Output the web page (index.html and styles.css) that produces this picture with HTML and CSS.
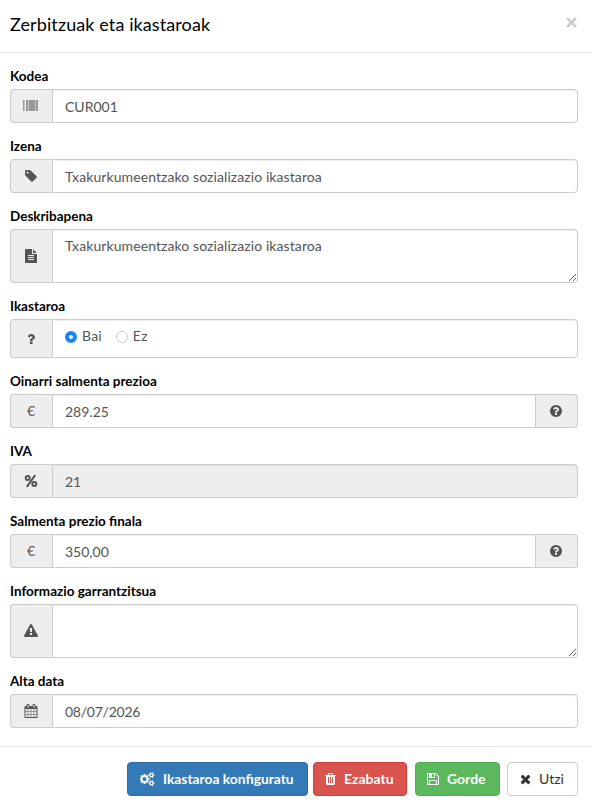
FILE: index.html
```html
<!DOCTYPE html>
<html lang="eu">
<head>
    <meta charset="UTF-8">
    <meta name="viewport" content="width=device-width, initial-scale=1.0">
    <title>Zerbitzuak eta ikastaroak</title>
    <link rel="stylesheet" href="styles.css">
</head>
<body>
    <div class="modal-header">
        <h4 class="modal-title">Zerbitzuak eta ikastaroak</h4>
        <button type="button" class="close" aria-label="Itxi">
            <svg viewBox="0 0 10 10"><path d="M1 1l8 8M9 1l-8 8"/></svg>
        </button>
    </div>
    <form class="modal-body">
        <div class="form-group">
            <label for="kodea">Kodea</label>
            <div class="input-group">
                <span class="addon">
                    <svg class="barcode" viewBox="0 0 16 12"><path fill="#999" d="M0 0h1v11H0zM3 0h2v11H3zM6 0h1v11H6zM7 0h5v11H7zM13 0h2v11h-2z"/><path fill="#c4c4c4" d="M1 0h1v11H1zM5 0h1v11H5zM12 0h1v11h-1z"/></svg>
                </span>
                <input type="text" id="kodea" class="form-control" value="CUR001">
            </div>
        </div>
        <div class="form-group">
            <label for="izena">Izena</label>
            <div class="input-group">
                <span class="addon">
                    <svg class="icon" viewBox="0 0 1792 1792"><path d="M576 448q0-53-37.500-90.500t-90.500-37.500-90.500 37.500-37.500 90.500 37.500 90.500 90.500 37.500 90.500-37.500 37.500-90.500zm1067 576q0 53-37 90l-491 492q-39 37-91 37-53 0-90-37l-715-716q-38-37-64.500-101t-26.500-117v-416q0-52 38-90t90-38h416q53 0 117 26.500t102 64.500l715 714q37 39 37 91z"/></svg>
                </span>
                <input type="text" id="izena" class="form-control prose" value="Txakurkumeentzako sozializazio ikastaroa">
            </div>
        </div>
        <div class="form-group">
            <label for="deskribapena">Deskribapena</label>
            <div class="input-group">
                <span class="addon">
                    <svg class="icon" viewBox="0 0 1792 1792"><path d="M1596 476q14 14 28 36h-472v-472q22 14 36 28zm-476 164h544v1056q0 40-28 68t-68 28h-1344q-40 0-68-28t-28-68v-1600q0-40 28-68t68-28h800v544q0 40 28 68t68 28zm160 736v-64q0-14-9-23t-23-9h-704q-14 0-23 9t-9 23v64q0 14 9 23t23 9h704q14 0 23-9t9-23zm0-256v-64q0-14-9-23t-23-9h-704q-14 0-23 9t-9 23v64q0 14 9 23t23 9h704q14 0 23-9t9-23zm0-256v-64q0-14-9-23t-23-9h-704q-14 0-23 9t-9 23v64q0 14 9 23t23 9h704q14 0 23-9t9-23z"/></svg>
                </span>
                <textarea id="deskribapena" class="form-control prose">Txakurkumeentzako sozializazio ikastaroa</textarea>
            </div>
        </div>
        <div class="form-group">
            <label>Ikastaroa</label>
            <div class="input-group">
                <span class="addon">
                    <svg class="icon" viewBox="0 0 1792 1792"><path d="M1088 1256v240q0 16-12 28t-28 12h-240q-16 0-28-12t-12-28v-240q0-16 12-28t28-12h240q16 0 28 12t12 28zm316-600q0 54-15.500 101t-35 76.500-55 59.500-57.500 43.500-61 35.500q-41 23-68.500 65t-27.500 67q0 17-12 32.500t-28 15.500h-240q-15 0-25.500-18.500t-10.500-37.500v-45q0-83 65-156.500t143-108.500q59-27 84-56t25-76q0-42-46.500-74t-107.500-32q-65 0-108 29-35 25-107 115-13 16-31 16-12 0-25-8l-164-125q-13-10-15.500-25t5.500-28q160-266 464-266 80 0 161 31t146 83 106 127.500 41 158.500z"/></svg>
                </span>
                <div class="form-control radios">
                    <label class="radio"><input type="radio" name="ikastaroa" checked>Bai</label>
                    <label class="radio"><input type="radio" name="ikastaroa">Ez</label>
                </div>
            </div>
        </div>
        <div class="form-group">
            <label for="oinarria">Oinarri salmenta prezioa</label>
            <div class="input-group">
                <span class="addon">€</span>
                <input type="text" id="oinarria" class="form-control" value="289.25">
                <span class="addon">
                    <svg class="icon" viewBox="0 0 1792 1792"><path d="M1024 1376v-192q0-14-9-23t-23-9h-192q-14 0-23 9t-9 23v192q0 14 9 23t23 9h192q14 0 23-9t9-23zm256-672q0-88-55.500-163t-138.500-116-170-41q-243 0-371 213-15 24 8 42l132 100q7 6 19 6 16 0 25-12 53-68 86-92 34-24 86-24 48 0 85.500 26t37.500 59q0 38-20 61t-68 45q-63 28-115.500 86.500t-52.500 125.500v36q0 14 9 23t23 9h192q14 0 23-9t9-23q0-19 21.500-49.500t54.500-49.500q32-18 49-28.500t46-35 44.500-48 28-60.500 12.500-81zm384 192q0 209-103 385.500t-279.500 279.500-385.500 103-385.500-103-279.500-279.500-103-385.500 103-385.500 279.500-279.500 385.500-103 385.500 103 279.500 279.500 103 385.500z"/></svg>
                </span>
            </div>
        </div>
        <div class="form-group">
            <label for="iva">IVA</label>
            <div class="input-group">
                <span class="addon">
                    <svg class="icon percent" viewBox="0 0 14 14"><circle cx="3.700" cy="4" r="2"/><circle cx="10.300" cy="10" r="2"/><path d="M11.200 1.200L2.800 12.800"/></svg>
                </span>
                <input type="text" id="iva" class="form-control" value="21" readonly>
            </div>
        </div>
        <div class="form-group">
            <label for="finala">Salmenta prezio finala</label>
            <div class="input-group">
                <span class="addon">€</span>
                <input type="text" id="finala" class="form-control" value="350,00">
                <span class="addon">
                    <svg class="icon" viewBox="0 0 1792 1792"><path d="M1024 1376v-192q0-14-9-23t-23-9h-192q-14 0-23 9t-9 23v192q0 14 9 23t23 9h192q14 0 23-9t9-23zm256-672q0-88-55.500-163t-138.500-116-170-41q-243 0-371 213-15 24 8 42l132 100q7 6 19 6 16 0 25-12 53-68 86-92 34-24 86-24 48 0 85.500 26t37.500 59q0 38-20 61t-68 45q-63 28-115.500 86.500t-52.500 125.500v36q0 14 9 23t23 9h192q14 0 23-9t9-23q0-19 21.500-49.500t54.500-49.500q32-18 49-28.500t46-35 44.500-48 28-60.500 12.500-81zm384 192q0 209-103 385.500t-279.500 279.500-385.500 103-385.500-103-279.500-279.500-103-385.500 103-385.500 279.500-279.500 385.500-103 385.500 103 279.500 279.500 103 385.500z"/></svg>
                </span>
            </div>
        </div>
        <div class="form-group">
            <label for="informazioa">Informazio garrantzitsua</label>
            <div class="input-group">
                <span class="addon">
                    <svg class="icon" viewBox="0 0 1792 1792"><path d="M1024 1375v-190q0-14-9.500-23.500t-22.500-9.500h-192q-13 0-22.500 9.500t-9.500 23.500v190q0 14 9.500 23.500t22.500 9.500h192q13 0 22.500-9.500t9.500-23.500zm-2-374l18-459q0-12-10-19-13-11-24-11h-220q-11 0-24 11-10 7-10 21l17 457q0 10 10 16.500t24 6.500h185q14 0 23.500-6.500t10.500-16.500zm-14-934l768 1408q35 63-2 126-17 29-46.500 46t-63.500 17h-1536q-34 0-63.500-17t-46.500-46q-37-63-2-126l768-1408q17-31 47-49t65-18 65 18 47 49z"/></svg>
                </span>
                <textarea id="informazioa" class="form-control"></textarea>
            </div>
        </div>
        <div class="form-group">
            <label for="data">Alta data</label>
            <div class="input-group">
                <span class="addon">
                    <svg class="icon" viewBox="0 0 1792 1792"><path d="M192 1664h288v-288h-288v288zm352 0h320v-288h-320v288zm-352-352h288v-320h-288v320zm352 0h320v-320h-320v320zm-352-384h288v-288h-288v288zm736 736h320v-288h-320v288zm-384-736h320v-288h-320v288zm768 736h288v-288h-288v288zm-384-352h320v-320h-320v320zm-352-864v-288q0-13-9.500-22.500t-22.500-9.500h-64q-13 0-22.500 9.500t-9.500 22.500v288q0 13 9.500 22.500t22.500 9.500h64q13 0 22.500-9.500t9.500-22.500zm736 864h288v-320h-288v320zm-384-384h320v-288h-320v288zm384 0h288v-288h-288v288zm32-480v-288q0-13-9.500-22.500t-22.500-9.500h-64q-13 0-22.500 9.500t-9.500 22.500v288q0 13 9.500 22.500t22.500 9.500h64q13 0 22.500-9.500t9.500-22.500zm384-64v1280q0 52-38 90t-90 38h-1408q-52 0-90-38t-38-90v-1280q0-52 38-90t90-38h128v-96q0-66 47-113t113-47h64q66 0 113 47t47 113v96h384v-96q0-66 47-113t113-47h64q66 0 113 47t47 113v96h128q52 0 90 38t38 90z"/></svg>
                </span>
                <input type="text" id="data" class="form-control date" value="08/07/2026">
            </div>
        </div>
    </form>
    <div class="modal-footer">
        <button type="button" class="btn btn-primary">
            <svg class="icon wide" viewBox="0 0 1920 1792"><path d="M832 896q0-106-75-181t-181-75-181 75-75 181 75 181 181 75 181-75 75-181zm768 512q0-52-38-90t-90-38-90 38-38 90q0 53 37.500 90.500t90.500 37.500 90.500-37.500 37.500-90.500zm0-1024q0-52-38-90t-90-38-90 38-38 90q0 53 37.500 90.500t90.500 37.500 90.500-37.500 37.500-90.500zm-384 421v185q0 10-7 19.500t-16 10.500l-155 24q-11 35-32 76 34 48 90 115 7 11 7 20 0 12-7 19-23 30-82.500 89.500t-78.500 59.500q-11 0-21-7l-115-90q-37 19-77 31-11 108-23 155-7 24-30 24h-186q-11 0-20-7.500t-10-17.500l-23-153q-34-10-75-31l-118 89q-7 7-20 7-11 0-21-8-144-133-144-160 0-9 7-19 10-14 41-53t47-61q-23-44-35-82l-152-24q-10-1-17-9.500t-7-19.500v-185q0-10 7-19.500t16-10.500l155-24q11-35 32-76-34-48-90-115-7-11-7-20 0-12 7-20 22-30 82-89t79-59q11 0 21 7l115 90q34-18 77-32 11-108 23-154 7-24 30-24h186q11 0 20 7.500t10 17.500l23 153q34 10 75 31l118-89q8-7 20-7 11 0 21 8 144 133 144 160 0 8-7 19-12 16-42 54t-45 60q23 48 34 82l152 23q10 2 17 10.500t7 19.500zm640 533v140q0 16-149 31-12 27-30 52 51 113 51 138 0 4-4 7-122 71-124 71-8 0-46-47t-52-68q-20 2-30 2t-30-2q-14 21-52 68t-46 47q-2 0-124-71-4-3-4-7 0-25 51-138-18-25-30-52-149-15-149-31v-140q0-16 149-31 13-29 30-52-51-113-51-138 0-4 4-7 4-2 35-20t59-34 30-16q8 0 46 46.500t52 67.500q20-2 30-2t30 2q51-71 92-112l6-2q4 0 124 70 4 3 4 7 0 25-51 138 17 23 30 52 149 15 149 31zm0-1024v140q0 16-149 31-12 27-30 52 51 113 51 138 0 4-4 7-122 71-124 71-8 0-46-47t-52-68q-20 2-30 2t-30-2q-14 21-52 68t-46 47q-2 0-124-71-4-3-4-7 0-25 51-138-18-25-30-52-149-15-149-31v-140q0-16 149-31 13-29 30-52-51-113-51-138 0-4 4-7 4-2 35-20t59-34 30-16q8 0 46 46.500t52 67.500q20-2 30-2t30 2q51-71 92-112l6-2q4 0 124 70 4 3 4 7 0 25-51 138 17 23 30 52 149 15 149 31z"/></svg>
            Ikastaroa konfiguratu
        </button>
        <button type="button" class="btn btn-danger">
            <svg class="icon narrow" viewBox="192 0 1408 1792"><path d="M704 1376v-704q0-14-9-23t-23-9h-64q-14 0-23 9t-9 23v704q0 14 9 23t23 9h64q14 0 23-9t9-23zm256 0v-704q0-14-9-23t-23-9h-64q-14 0-23 9t-9 23v704q0 14 9 23t23 9h64q14 0 23-9t9-23zm256 0v-704q0-14-9-23t-23-9h-64q-14 0-23 9t-9 23v704q0 14 9 23t23 9h64q14 0 23-9t9-23zm-544-992h448l-48-117q-7-9-17-11h-317q-10 2-17 11zm928 32v64q0 14-9 23t-23 9h-96v948q0 83-47 143.500t-113 60.500h-832q-66 0-113-58.500t-47-141.500v-952h-96q-14 0-23-9t-9-23v-64q0-14 9-23t23-9h309l70-167q15-37 54-63t79-26h320q40 0 79 26t54 63l70 167h309q14 0 23 9t9 23z"/></svg>
            Ezabatu
        </button>
        <button type="button" class="btn btn-success">
            <svg class="icon mid" viewBox="128 0 1536 1792"><path d="M512 1536h768v-384h-768v384zm896 0h128v-896q0-14-10-38.500t-20-34.500l-281-281q-10-10-34-20t-39-10v416q0 40-28 68t-68 28h-576q-40 0-68-28t-28-68v-416h-128v1280h128v-416q0-40 28-68t68-28h832q40 0 68 28t28 68v416zm-384-928v-320q0-13-9.500-22.500t-22.500-9.500h-192q-13 0-22.500 9.500t-9.500 22.500v320q0 13 9.500 22.500t22.500 9.500h192q13 0 22.500-9.500t9.500-22.500zm640 32v928q0 40-28 68t-68 28h-1344q-40 0-68-28t-28-68v-1344q0-40 28-68t68-28h928q40 0 88 20t76 48l280 280q28 28 48 76t20 88z"/></svg>
            Gorde
        </button>
        <button type="button" class="btn btn-default">
            <svg class="icon narrow" viewBox="192 0 1408 1792"><path d="M1490 1322q0 40-28 68l-136 136q-28 28-68 28t-68-28l-294-294-294 294q-28 28-68 28t-68-28l-136-136q-28-28-28-68t28-68l294-294-294-294q-28-28-28-68t28-68l136-136q28-28 68-28t68 28l294 294 294-294q28-28 68-28t68 28l136 136q28 28 28 68t-28 68l-294 294 294 294q28 28 28 68z"/></svg>
            Utzi
        </button>
    </div>
</body>
</html>
```
FILE: styles.css
```css
* {
    box-sizing: border-box;
}
body {
    margin: 0;
    background-color: #fff;
    color: #000;
    font-family: Lato, "Open Sans", sans-serif;
    font-size: 14px;
    line-height: 20px;
}
.modal-header {
    display: flex;
    justify-content: space-between;
    height: 53px;
    padding: 12px 15px 0 10px;
    border-bottom: 1px solid #e5e5e5;
}
.modal-title {
    margin: 0;
    font-size: 18px;
    font-weight: 400;
    line-height: 25px;
    letter-spacing: .1px;
}
.close {
    width: 11px;
    height: 11px;
    margin-top: 5px;
    padding: 0;
    border: 0;
    background: none;
}
.close svg {
    display: block;
    width: 11px;
    height: 11px;
    fill: none;
    stroke: #ccc;
    stroke-width: 2.300;
}
.modal-body {
    padding: 13px 14px 5px 10px;
}
.form-group {
    margin-bottom: 13px;
}
.form-group > label {
    display: block;
    height: 20px;
    margin-bottom: 3px;
    font-size: 13.500px;
    font-weight: 700;
}
.input-group {
    display: flex;
}
.addon {
    display: flex;
    align-items: center;
    justify-content: center;
    width: 42px;
    padding-right: 1px;
    border: 1px solid #ccc;
    border-right: 0;
    border-radius: 4px 0 0 4px;
    background-color: #eee;
    color: #555;
}
.addon:last-child {
    border-right: 1px solid #ccc;
    border-left: 0;
    border-radius: 0 4px 4px 0;
}
.form-control {
    flex: 1;
    min-width: 0;
    height: 34px;
    margin: 0;
    padding: 6px 12px;
    border: 1px solid #ccc;
    border-radius: 0;
    background-color: #fff;
    box-shadow: inset 0 1px 1px rgba(0, 0, 0, .075);
    color: #555;
    font: inherit;
    outline: 0;
}
.form-control:last-child {
    border-radius: 0 4px 4px 0;
}
.form-control[readonly] {
    background-color: #eee;
}
.form-control.prose {
    letter-spacing: .09px;
}
.form-control.date {
    letter-spacing: -.25px;
}
textarea.form-control {
    height: 54px;
    resize: vertical;
}
.radios {
    display: flex;
    gap: 14px;
    height: 39px;
    letter-spacing: .2px;
}
.radio {
    display: flex;
    gap: 5px;
}
.radio input {
    width: 12px;
    height: 12px;
    margin: 5px 0 0;
    border: 1px solid #ccc;
    border-radius: 50%;
    background-color: #fff;
    appearance: none;
}
.radio input:checked {
    border: 4px solid #1a82fb;
}
.icon {
    flex-shrink: 0;
    width: 14px;
    height: 14px;
    fill: currentColor;
}
.icon.wide {
    width: 15px;
}
.icon.mid {
    width: 12px;
}
.icon.narrow {
    width: 11px;
}
.icon.percent {
    fill: none;
    stroke: currentColor;
    stroke-width: 2;
}
.barcode {
    width: 16px;
    height: 12px;
}
.modal-footer {
    display: flex;
    justify-content: flex-end;
    padding: 15px 14px 10px;
    border-top: 1px solid #e5e5e5;
}
.btn {
    display: flex;
    align-items: center;
    gap: 8px;
    height: 34px;
    padding: 0 0 0 12px;
    border: 1px solid transparent;
    border-radius: 4px;
    color: #fff;
    font: inherit;
    font-weight: 700;
    white-space: nowrap;
}
.btn-primary {
    width: 181px;
    border-color: #2e6da4;
    background-color: #337ab7;
    font-size: 13.800px;
}
.btn-danger {
    width: 94px;
    margin-left: 5px;
    padding-left: 11px;
    border-color: #d43f3a;
    background-color: #d9534f;
}
.btn-success {
    width: 85px;
    margin-left: 8px;
    padding-left: 11px;
    border-color: #4cae4c;
    background-color: #5cb85c;
}
.btn-default {
    width: 71px;
    margin-left: 7px;
    border-color: #ccc;
    background-color: #fff;
    color: #333;
    font-weight: 400;
}
```
